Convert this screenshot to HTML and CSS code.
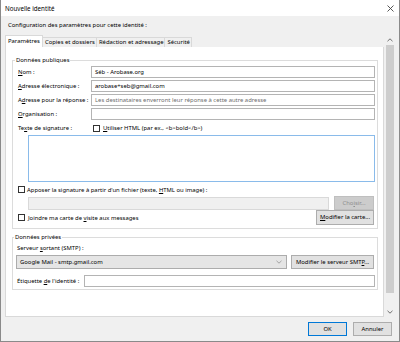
FILE: index.html
```html
<!DOCTYPE html>
<html lang="fr">
<head>
    <meta charset="UTF-8">
    <title>Nouvelle identité</title>
    <link rel="stylesheet" href="styles.css">
</head>
<body>
    <div class="window">
        <div class="titlebar">
            <span class="title">Nouvelle identité</span>
            <svg class="close" width="7" height="7" viewBox="0 0 7 7"><path d="M0.5 0.5L6.5 6.5M6.5 0.5L0.5 6.5" stroke="#444" stroke-width="0.9" fill="none"/></svg>
        </div>
        <div class="content">
            <div class="intro">Configuration des paramètres pour cette identité :</div>
            <div class="main">
                <div class="pane">
                    <div class="tabs">
                        <div class="tab active">Paramètres</div>
                        <div class="tab">Copies et dossiers</div>
                        <div class="tab">Rédaction et adressage</div>
                        <div class="tab">Sécurité</div>
                    </div>
                    <div class="panel">
                        <fieldset class="group">
                            <legend>Données publiques</legend>
                            <div class="form-grid">
                                <span class="label"><u>N</u>om :</span>
                                <div class="field">Séb - Arobase.org</div>
                                <span class="label"><u>A</u>dresse électronique :</span>
                                <div class="field">arobase+seb@gmail.com</div>
                                <span class="label">A<u>d</u>resse pour la réponse :</span>
                                <div class="field placeholder">Les destinataires enverront leur réponse à cette autre adresse</div>
                                <span class="label"><u>O</u>rganisation :</span>
                                <div class="field"></div>
                                <span class="label">Te<u>x</u>te de signature :</span>
                                <span class="check html-check"><span class="cb"></span><span><u>U</u>tiliser HTML (par ex., &lt;b&gt;bold&lt;/b&gt;)</span></span>
                            </div>
                            <div class="sig-box"></div>
                            <div class="check-row"><span class="cb"></span><span>Apposer la signature à partir d'un fichier (texte, <u>H</u>TML ou image) :</span></div>
                            <div class="file-row">
                                <div class="field disabled"></div>
                                <div class="btn btn-disabled">Cho<u>i</u>sir...</div>
                            </div>
                            <div class="card-row">
                                <span class="check"><span class="cb"></span><span>Joindre ma carte de <u>v</u>isite aux messages</span></span>
                                <div class="btn card-btn"><u>M</u>odifier la carte...</div>
                            </div>
                        </fieldset>
                        <fieldset class="group private">
                            <legend>Données privées</legend>
                            <div class="smtp-label">Serveur <u>s</u>ortant (SMTP) :</div>
                            <div class="smtp-row">
                                <div class="select">
                                    <span>Google Mail - smtp.gmail.com</span>
                                    <svg width="6" height="4" viewBox="0 0 6 4"><path d="M0.5 0.8L3 3.2L5.5 0.8" stroke="#888" stroke-width="0.7" fill="none"/></svg>
                                </div>
                                <div class="btn smtp-btn">Modifier le serveur SMT<u>P</u>...</div>
                            </div>
                            <div class="label-row">
                                <span class="label">Étiquette <u>d</u>e l'identité :</span>
                                <div class="field"></div>
                            </div>
                        </fieldset>
                    </div>
                </div>
                <div class="scrollbar">
                    <div class="arrow"><svg width="6" height="4" viewBox="0 0 6 4"><path d="M0.5 3.2L3 0.8L5.5 3.2" stroke="#606060" stroke-width="0.9" fill="none"/></svg></div>
                    <div class="track"><div class="thumb"></div></div>
                    <div class="arrow"><svg width="6" height="4" viewBox="0 0 6 4"><path d="M0.5 0.8L3 3.2L5.5 0.8" stroke="#606060" stroke-width="0.9" fill="none"/></svg></div>
                </div>
            </div>
            <div class="actions">
                <div class="btn btn-default">OK</div>
                <div class="btn">Annuler</div>
            </div>
        </div>
    </div>
</body>
</html>
```

FILE: styles.css
```css
* {
    margin: 0;
    padding: 0;
    box-sizing: border-box;
}
body {
    font-family: "Noto Sans", "Liberation Sans", sans-serif;
    font-size: 5.9px;
    color: #000;
    background: #fff;
}
u {
    text-decoration: underline;
    text-underline-offset: 1px;
}
.window {
    width: 400px;
    height: 342px;
    border: 1px solid #8a8a8a;
    border-top: 0;
    background: #f0f0f0;
    display: flex;
    flex-direction: column;
}
.titlebar {
    height: 16px;
    flex: none;
    background: #fff;
    display: flex;
    align-items: center;
    justify-content: space-between;
    padding: 0 5px 0 4px;
    font-size: 6.2px;
}
.content {
    flex: 1;
    display: flex;
    flex-direction: column;
    padding: 0 4px;
}
.intro {
    height: 19px;
    line-height: 19px;
    padding-left: 3px;
}
.main {
    height: 282px;
    display: flex;
    gap: 1px;
}
.pane {
    width: 379px;
    display: flex;
    flex-direction: column;
}
.tabs {
    height: 12px;
    display: flex;
    align-items: flex-end;
}
.tab {
    height: 10px;
    line-height: 9px;
    padding: 0 1px 0 2px;
    border: 1px solid #d9d9d9;
    border-bottom: 0;
    border-left: 0;
    background: #f0f0f0;
}
.tab.active {
    height: 12px;
    line-height: 11px;
    background: #fff;
    border-left: 1px solid #d9d9d9;
    padding: 0 2px;
}
.panel {
    flex: 1;
    background: #fff;
    border: 1px solid #d9d9d9;
    border-top: 0;
    padding: 9px 5px 0 6px;
}
.group {
    border: 1px solid #dcdcdc;
    padding: 2px 2px 3px 5px;
}
.group legend {
    line-height: 8px;
    padding: 0 1px;
    margin-left: -3px;
}
.form-grid {
    display: grid;
    grid-template-columns: 73px 1fr;
    grid-auto-rows: 12px;
    row-gap: 2px;
    align-items: center;
}
.label {
    white-space: nowrap;
}
.field {
    height: 12px;
    line-height: 10px;
    border: 1px solid #b4b4b4;
    background: #fff;
    padding-left: 3px;
    white-space: nowrap;
    overflow: hidden;
}
.field.placeholder {
    color: #6d6d6d;
}
.field.disabled {
    flex: 1;
    height: 13px;
    background: #f0f0f0;
    border-color: #d9d9d9;
}
.check {
    display: flex;
    align-items: center;
    gap: 3px;
    white-space: nowrap;
}
.html-check {
    margin-left: 2px;
}
.cb {
    width: 7px;
    height: 7px;
    flex: none;
    border: 1px solid #333;
    background: #fff;
}
.sig-box {
    height: 47px;
    margin: 1px 0 0 10px;
    border: 1px solid #8abbea;
    background: #fff;
}
.check-row {
    height: 11px;
    margin-top: 2px;
    display: flex;
    align-items: center;
    gap: 2px;
    white-space: nowrap;
}
.file-row {
    height: 14px;
    margin: 1px 1px 0 10px;
    display: flex;
    align-items: center;
    gap: 5px;
}
.btn {
    height: 14px;
    line-height: 12px;
    padding: 0 3px;
    text-align: center;
    white-space: nowrap;
    background: #e1e1e1;
    border: 1px solid #adadad;
}
.btn-disabled {
    width: 40px;
    background: #cccccc;
    border-color: #bfbfbf;
    color: #8e8e8e;
}
.card-row {
    height: 15px;
    margin-right: 1px;
    display: flex;
    align-items: center;
    justify-content: space-between;
}
.card-btn {
    width: 58px;
    height: 15px;
    line-height: 13px;
}
.private {
    margin-top: 4px;
    padding: 2px 2px 2px 4px;
}
.smtp-label {
    height: 10px;
    line-height: 10px;
}
.smtp-row {
    height: 14px;
    margin: 2px 1px 0 -1px;
    display: flex;
    gap: 4px;
}
.select {
    flex: 1;
    display: flex;
    align-items: center;
    justify-content: space-between;
    padding: 0 4px 0 3px;
    background: #e5e5e5;
    border: 1px solid #acacac;
}
.smtp-btn {
    width: 83px;
}
.label-row {
    height: 12px;
    margin-top: 6px;
    display: grid;
    grid-template-columns: 67px 1fr;
    align-items: center;
}
.scrollbar {
    width: 10px;
    display: flex;
    flex-direction: column;
    background: #f0f0f0;
}
.arrow {
    height: 10px;
    display: flex;
    align-items: center;
    justify-content: center;
}
.track {
    flex: 1;
    padding: 0 1px 14px;
}
.thumb {
    height: 248px;
    background: #cdcdcd;
}
.actions {
    flex: 1;
    display: flex;
    align-items: center;
    justify-content: flex-end;
    gap: 6px;
    padding-right: 3px;
}
.actions .btn {
    width: 39px;
}
.btn-default {
    border-color: #0078d7;
}
```
